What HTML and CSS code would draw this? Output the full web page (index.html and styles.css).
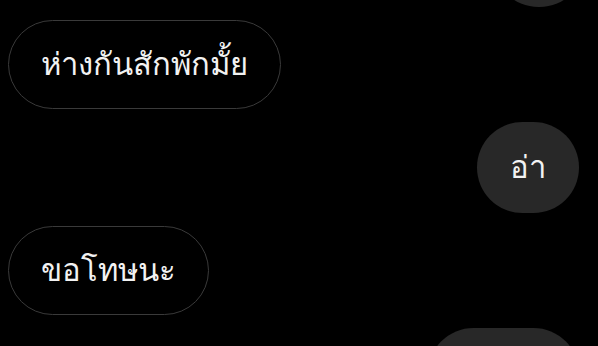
FILE: index.html
```html
<!DOCTYPE html>
<html lang="th">

<head>
    <meta charset="UTF-8">
    <meta name="viewport" content="width=device-width, initial-scale=1.0">
    <title>Chat</title>
    <link rel="stylesheet" href="styles.css">
</head>

<body>

    <div class="chat">
        <div class="bubble bubble-me bubble-top">&nbsp;</div>
        <div class="bubble bubble-them">ห่างกันสักพักมั้ย</div>
        <div class="bubble bubble-me">อ่า</div>
        <div class="bubble bubble-them">ขอโทษนะ</div>
        <div class="bubble bubble-me bubble-bottom">&nbsp;</div>
    </div>

</body>

</html>
```

FILE: styles.css
```css
* {
    box-sizing: border-box;
}

body {
    margin: 0;
    background-color: #000;
    font-family: "DejaVu Sans", sans-serif;
    overflow: hidden;
    height: 346px;
}

.chat {
    display: flex;
    flex-direction: column;
    gap: 13px;
    padding: 0 19px 0 8px;
}

.bubble {
    font-size: 31px;
    line-height: 45px;
    color: #f2f2f2;
    padding: 23px 33px;
    border-radius: 46px;
    white-space: nowrap;
}

.bubble-them {
    align-self: flex-start;
    border: 1px solid #3a3a3a;
    padding: 21px 32px;
}

.bubble-me {
    align-self: flex-end;
    background-color: #282828;
}

.bubble-top {
    width: 92px;
    margin-top: -84px;
    margin-right: -6px;
}

.bubble-bottom {
    width: 151px;
}
```
